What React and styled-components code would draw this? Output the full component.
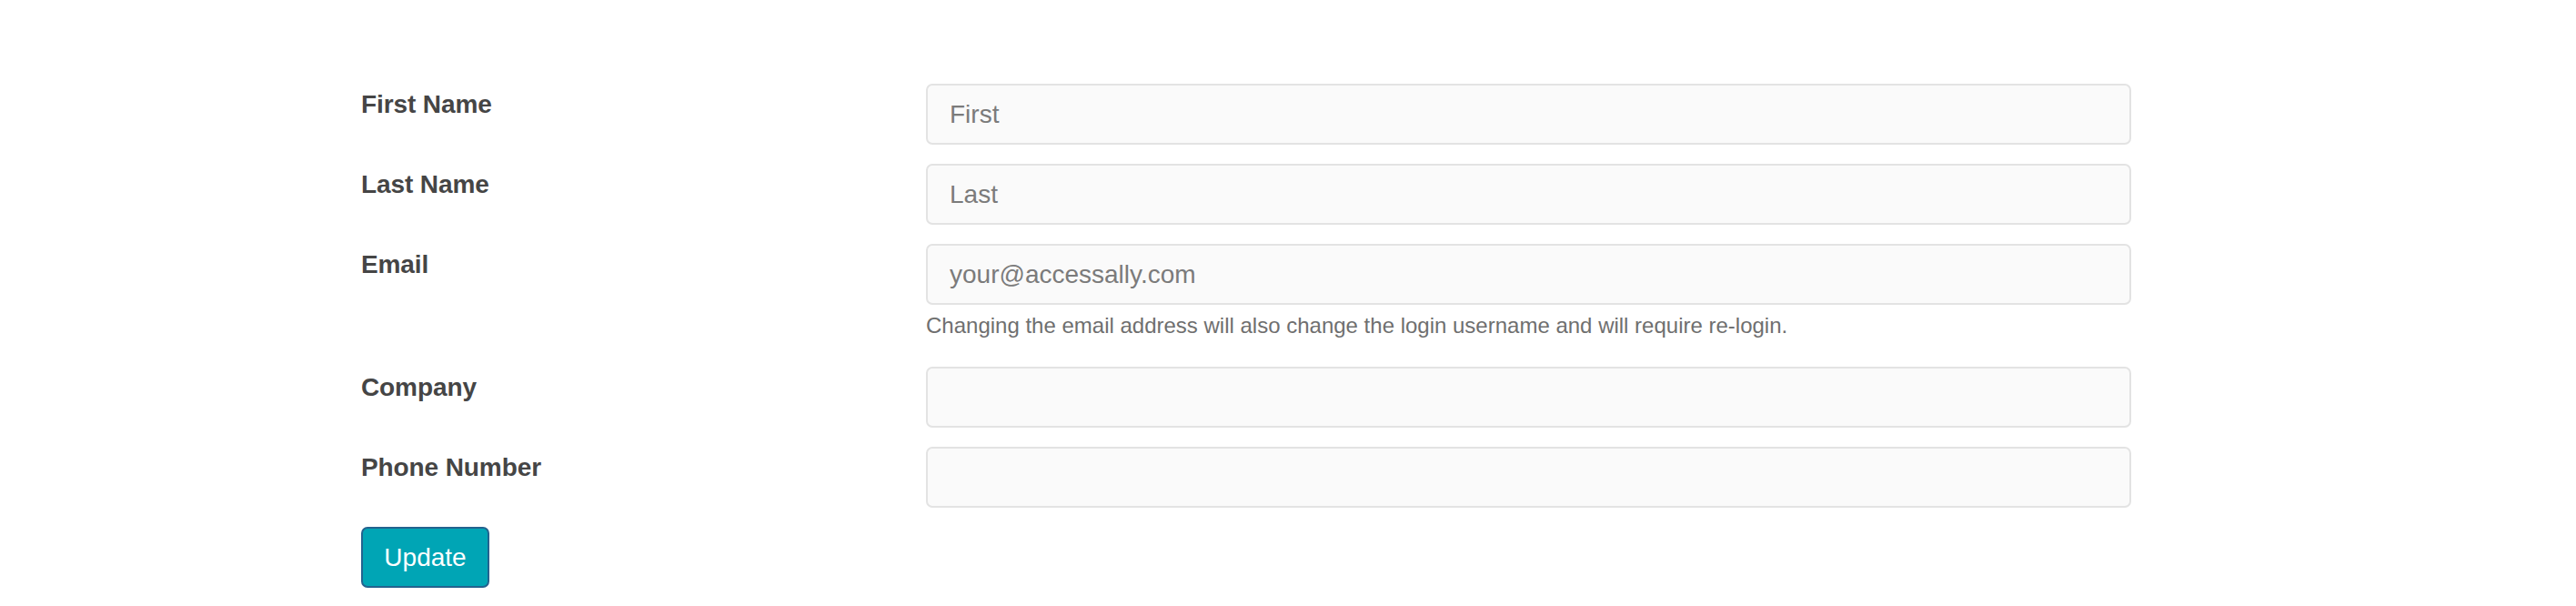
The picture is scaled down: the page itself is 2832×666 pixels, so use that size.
import React from "react";
import styled, { createGlobalStyle } from "styled-components";

const GlobalStyle = createGlobalStyle`
  html, body {
    margin: 0;
    padding: 0;
    background: #ffffff;
    font-family: "Liberation Sans", Arial, Helvetica, sans-serif;
  }
  * { box-sizing: border-box; }
`;

const Page = styled.div`
  padding: 92px 0 0 397px;
`;

const Form = styled.form`
  width: 1946px;
  display: flex;
  flex-direction: column;
  gap: 21px;
`;

const Row = styled.div`
  display: grid;
  grid-template-columns: 621px 1fr;
  align-items: start;
`;

const Label = styled.label`
  font-size: 28px;
  font-weight: 700;
  line-height: 44px;
  margin-top: 1px;
  color: #454545;
  letter-spacing: -0.1px;
`;

const Field = styled.div`
  display: flex;
  flex-direction: column;
`;

const Input = styled.input`
  width: 100%;
  height: 67px;
  padding: 0 24px;
  border: 2px solid #e3e3e3;
  border-radius: 7px;
  background: #fafafa;
  font-family: inherit;
  font-size: 28px;
  color: #333;
  outline: none;
  &::placeholder {
    color: #7b7b7b;
    opacity: 1;
  }
`;

const Help = styled.p`
  margin: 9px 0 10px;
  font-size: 24px;
  line-height: 28px;
  color: #6f6f6f;
`;

const Button = styled.button`
  align-self: flex-start;
  width: 141px;
  height: 67px;
  padding: 0;
  border: 2px solid #23638f;
  border-radius: 7px;
  background: #00a5b5;
  color: #ffffff;
  font-family: inherit;
  font-size: 28px;
  cursor: pointer;
`;

const fields = [
  { id: "first", label: "First Name", placeholder: "First" },
  { id: "last", label: "Last Name", placeholder: "Last" },
  {
    id: "email",
    label: "Email",
    placeholder: "your@accessally.com",
    help: "Changing the email address will also change the login username and will require re-login.",
  },
  { id: "company", label: "Company", placeholder: "" },
  { id: "phone", label: "Phone Number", placeholder: "" },
];

export default function App() {
  return (
    <>
      <GlobalStyle />
      <Page>
        <Form onSubmit={(e) => e.preventDefault()}>
          {fields.map((f) => (
            <Row key={f.id}>
              <Label htmlFor={f.id}>{f.label}</Label>
              <Field>
                <Input id={f.id} type="text" placeholder={f.placeholder} />
                {f.help && <Help>{f.help}</Help>}
              </Field>
            </Row>
          ))}
          <Button type="submit">Update</Button>
        </Form>
      </Page>
    </>
  );
}
